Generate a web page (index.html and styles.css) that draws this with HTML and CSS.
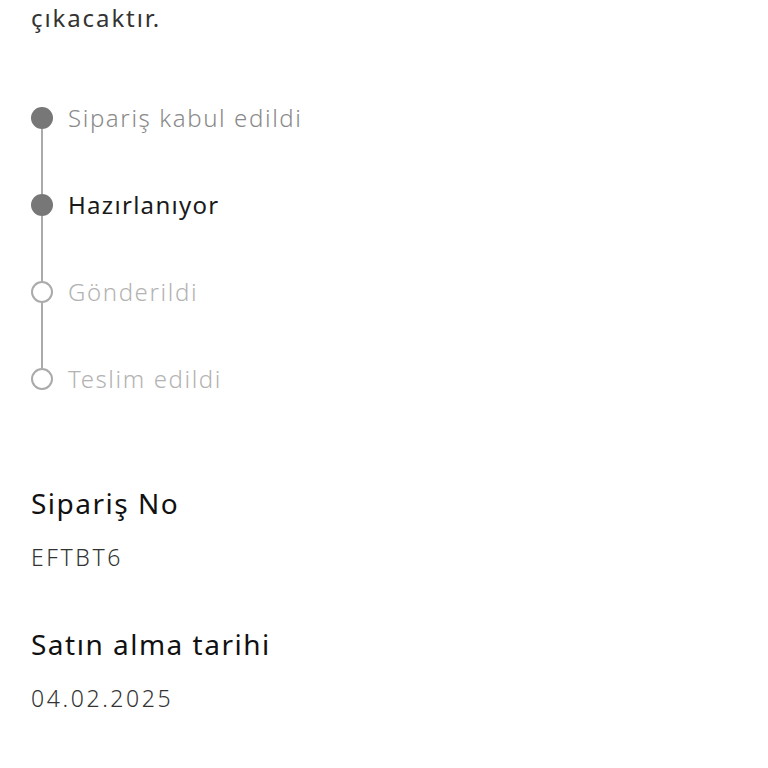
FILE: index.html
```html
<!DOCTYPE html>
<html lang="tr">
<head>
<meta charset="utf-8">
<link rel="stylesheet" href="styles.css">
</head>
<body>
<main class="page">
  <p class="intro">çıkacaktır.</p>
  <ol class="timeline">
    <li class="step done">
      <div class="marker"><span class="dot"></span><span class="line"></span></div>
      <span class="label">Sipariş kabul edildi</span>
    </li>
    <li class="step current">
      <div class="marker"><span class="dot"></span><span class="line"></span></div>
      <span class="label">Hazırlanıyor</span>
    </li>
    <li class="step todo">
      <div class="marker"><span class="dot"></span><span class="line"></span></div>
      <span class="label">Gönderildi</span>
    </li>
    <li class="step todo last">
      <div class="marker"><span class="dot"></span></div>
      <span class="label">Teslim edildi</span>
    </li>
  </ol>
  <section class="info">
    <h2 class="info-title">Sipariş No</h2>
    <p class="info-value">EFTBT6</p>
  </section>
  <section class="info">
    <h2 class="info-title">Satın alma tarihi</h2>
    <p class="info-value">04.02.2025</p>
  </section>
</main>
</body>
</html>
```

FILE: styles.css
```css
html, body {
  margin: 0;
  padding: 0;
  background: #ffffff;
}
body {
  font-family: "Noto Sans", "Liberation Sans", sans-serif;
  color: #222;
}
.page {
  padding: 0 31px;
}
.intro {
  margin: 0;
  font-size: 24px;
  line-height: 36px;
  letter-spacing: 1.9px;
  color: #333;
}
.timeline {
  list-style: none;
  margin: 71px 0 0 0;
  padding: 0;
}
.step {
  display: flex;
  gap: 15px;
  height: 87px;
}
.step.last {
  height: 22px;
}
.marker {
  width: 22px;
  display: flex;
  flex-direction: column;
  align-items: center;
}
.dot {
  width: 22px;
  height: 22px;
  box-sizing: border-box;
  border-radius: 50%;
  flex: none;
}
.line {
  flex: 1;
  width: 2px;
  background: #aaaaaa;
}
.done .dot, .current .dot {
  background: #777777;
}
.todo .dot {
  border: 2px solid #aaaaaa;
  background: #fff;
}
.label {
  font-size: 24px;
  line-height: 22px;
  height: 22px;
  font-weight: 300;
  letter-spacing: 1.6px;
}
.done .label { color: #8a8a8a; }
.current .label { color: #1a1a1a; font-weight: 400; letter-spacing: 1.3px; }
.todo .label { color: #b3b3b3; }
.info:first-of-type {
  margin-top: 95px;
}
.info + .info {
  margin-top: 54px;
}
.info-title {
  margin: 0;
  font-size: 28px;
  line-height: 36px;
  font-weight: 400;
  letter-spacing: 1.5px;
  color: #111;
}
.info-value {
  margin: 21px 0 0 0;
  font-size: 23px;
  line-height: 30px;
  letter-spacing: 2.6px;
  color: #333;
  font-weight: 300;
}
```
